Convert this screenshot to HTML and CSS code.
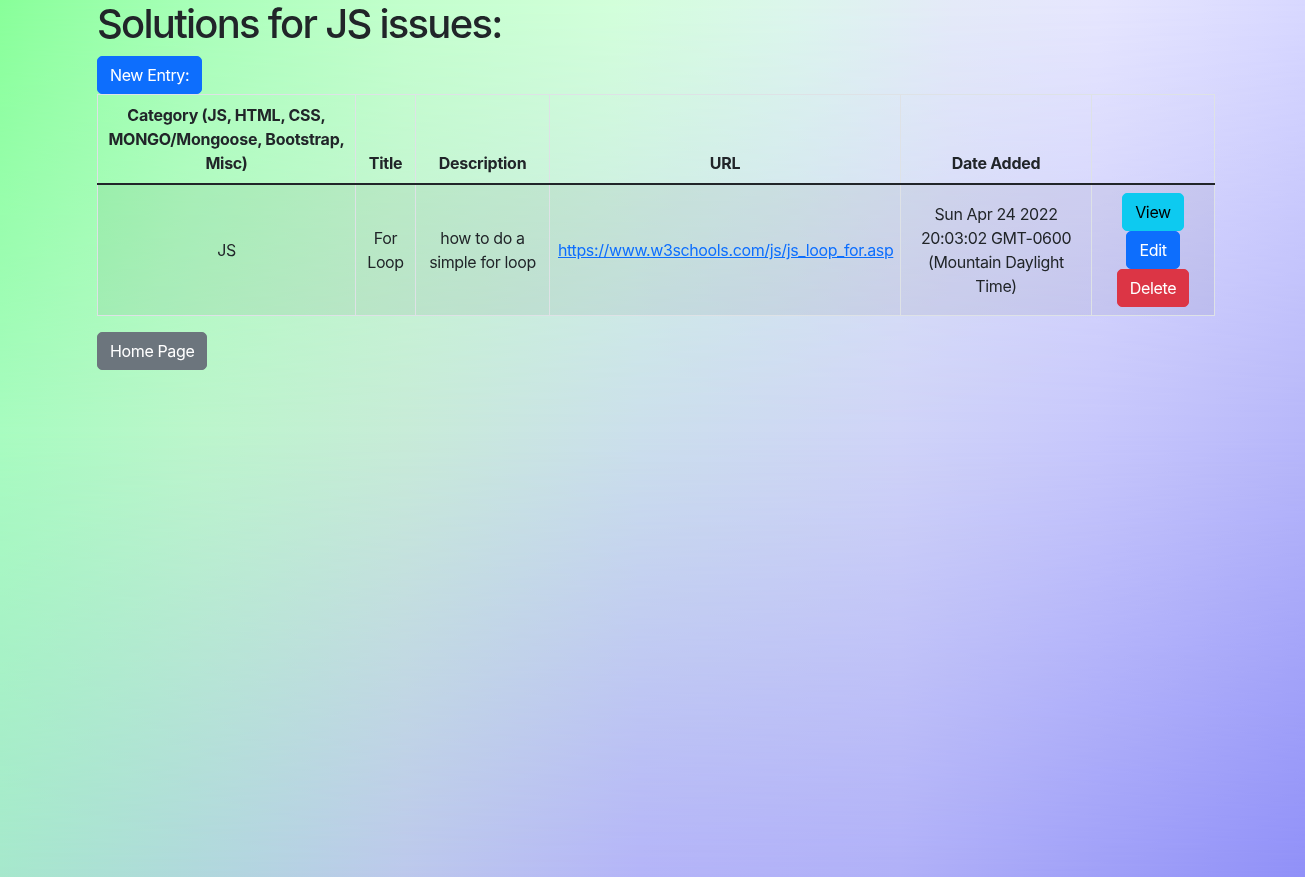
FILE: index.html
```html
<!DOCTYPE html>
<html lang="en">
<head>
<meta charset="utf-8">
<title>Solutions for JS issues</title>
<link rel="stylesheet" href="styles.css">
</head>
<body>
<div class="container">
  <h1 class="title">Solutions for JS issues:</h1>
  <a class="btn btn-primary" href="#">New Entry:</a>
  <table class="table">
    <colgroup>
      <col class="c-cat">
      <col class="c-title">
      <col class="c-desc">
      <col class="c-url">
      <col class="c-date">
      <col class="c-act">
    </colgroup>
    <thead>
      <tr>
        <th>Category (JS, HTML, CSS, MONGO/Mongoose, Bootstrap, Misc)</th>
        <th>Title</th>
        <th>Description</th>
        <th>URL</th>
        <th>Date Added</th>
        <th></th>
      </tr>
    </thead>
    <tbody>
      <tr class="striped">
        <td>JS</td>
        <td>For Loop</td>
        <td>how to do a simple for loop</td>
        <td><a class="link" href="#">https://www.w3schools.com/js/js_loop_for.asp</a></td>
        <td>Sun Apr 24 2022 20:03:02 GMT-0600 (Mountain Daylight Time)</td>
        <td>
          <div class="actions">
            <a class="btn btn-info" href="#">View</a>
            <a class="btn btn-primary" href="#">Edit</a>
            <a class="btn btn-danger" href="#">Delete</a>
          </div>
        </td>
      </tr>
    </tbody>
  </table>
  <a class="btn btn-secondary" href="#">Home Page</a>
</div>
</body>
</html>
```

FILE: styles.css
```css
html {
  min-height: 100%;
  background: linear-gradient(to right, #a8fcc0 0%, #bcf6cc 15%, #c8ecd8 31%, #cce0ec 49%, #d0d4f8 69%, #c8c8fc 84%, #b8b8fa 100%);
}

body {
  margin: 0;
  font-family: Inter, "Liberation Sans", sans-serif;
  font-size: 16px;
  line-height: 1.5;
  letter-spacing: -0.37px;
  color: #212529;
}

/* decorative background tint layers (top row and bottom row of the gradient) */
body::before,
body::after {
  content: "";
  position: fixed;
  inset: 0;
  z-index: -1;
  pointer-events: none;
}

body::before {
  background: linear-gradient(to right, #88ff99 0%, #a8ffb8 15%, #c2ffcc 31%, #d2ffda 47%, #dcf6ec 61%, #e4eaf8 73%, #e6e6fe 84%, #d8d8ff 100%);
  -webkit-mask-image: linear-gradient(to bottom, #000 0%, transparent 49%);
  mask-image: linear-gradient(to bottom, #000 0%, transparent 49%);
}

body::after {
  background: linear-gradient(to right, #a6e8cc 0%, #b0d8dc 15%, #bcc8ec 31%, #b4b4f8 49%, #b0b0f8 69%, #a0a0f8 84%, #9090f8 100%);
  -webkit-mask-image: linear-gradient(to bottom, transparent 49%, #000 100%);
  mask-image: linear-gradient(to bottom, transparent 49%, #000 100%);
}

.container {
  width: 1117px;
  margin-left: calc(50% - 555.5px);
}

.title {
  margin: 0 0 8px;
  font-size: 40px;
  font-weight: 500;
  line-height: 1.2;
  letter-spacing: -1.75px;
}

.btn {
  display: inline-block;
  padding: 6px 12px;
  font-size: 16px;
  line-height: 24px;
  border: 1px solid transparent;
  border-radius: 5px;
  text-decoration: none;
  color: #fff;
  text-align: center;
  vertical-align: middle;
}

.btn-primary { background: #0d6efd; border-color: #0d6efd; }
.btn-info { background: #0dcaf0; border-color: #0dcaf0; color: #000; }
.btn-danger { background: #dc3545; border-color: #dc3545; }
.btn-secondary { background: #6c757d; border-color: #6c757d; }

.table {
  width: 100%;
  table-layout: fixed;
  border-collapse: collapse;
  margin-bottom: 16px;
  text-align: center;
  color: #212529;
}

.c-cat { width: 258px; }
.c-title { width: 60px; }
.c-desc { width: 134px; }
.c-url { width: 351px; }
.c-date { width: 191px; }
.c-act { width: 123px; }

.table th,
.table td {
  padding: 8px;
  border: 1px solid #dee2e6;
}

.table th {
  vertical-align: bottom;
  font-weight: 700;
  letter-spacing: -0.25px;
}

.table td {
  vertical-align: middle;
}

.table tbody tr:first-child td {
  border-top: 2px solid #212529;
}

.striped td {
  background: rgba(0, 0, 0, 0.05);
}

.link {
  color: #0d6efd;
  text-decoration: underline;
}

.actions {
  display: flex;
  flex-direction: column;
  align-items: center;
}
```
